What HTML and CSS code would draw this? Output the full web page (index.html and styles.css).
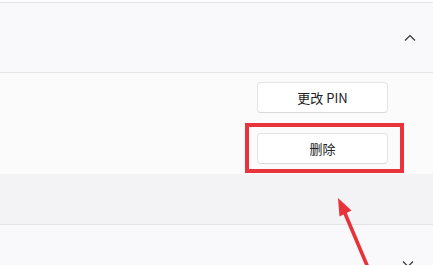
FILE: index.html
```html
<!DOCTYPE html>
<html lang="zh-CN">
<head>
<meta charset="utf-8">
<link rel="stylesheet" href="styles.css">
</head>
<body>
<div class="page">
  <div class="top-strip"></div>
  <div class="header">
    <svg class="chev" width="12" height="8" viewBox="0 0 12 8"><path d="M1 6.5 L6 1.5 L11 6.5" fill="none" stroke="#333" stroke-width="1.2"/></svg>
  </div>
  <div class="content">
    <button class="btn">更改 PIN</button>
    <div class="del-wrap">
      <button class="btn">删除</button>
      <div class="highlight"></div>
    </div>
  </div>
  <div class="band"></div>
  <div class="footer">
    <svg class="chev" width="12" height="8" viewBox="0 0 12 8"><path d="M1 1.5 L6 6.5 L11 1.5" fill="none" stroke="#333" stroke-width="1.2"/></svg>
  </div>
  <svg class="arrow" width="433" height="265" viewBox="0 0 433 265">
    <line x1="344" y1="211" x2="369" y2="270" stroke="#e8323a" stroke-width="3.6"/>
    <polygon points="338,198 351.5,210.5 339.5,216.5" fill="#e8323a"/>
  </svg>
</div>
</body>
</html>
```
FILE: styles.css
```css
html, body {
  margin: 0;
  padding: 0;
}
body {
  width: 433px;
  height: 265px;
  overflow: hidden;
  background: #f9f9fb;
  font-family: "Noto Sans CJK SC", "Noto Sans", sans-serif;
}
.page {
  position: relative;
  width: 433px;
  height: 265px;
  display: flex;
  flex-direction: column;
}
.top-strip {
  height: 2px;
  background: #fdfdfd;
  border-bottom: 1px solid #e6e6e8;
}
.header {
  height: 69px;
  background: #f9f9fb;
  border-bottom: 1px solid #e5e5e7;
  display: flex;
  align-items: center;
  justify-content: flex-end;
  padding-right: 17px;
}
.header .chev {
  margin-top: 1px;
}
.content {
  background: #fbfbfc;
  padding: 9px 45px 10px 0;
  display: flex;
  flex-direction: column;
  align-items: flex-end;
  gap: 20px;
}
.btn {
  width: 131px;
  height: 31px;
  background: #ffffff;
  border: 1px solid #e4e4e6;
  border-bottom-color: #d8d8da;
  border-radius: 4px;
  font-family: "Noto Sans CJK SC", "Noto Sans", sans-serif;
  font-size: 13px;
  color: #222222;
  padding: 0;
  display: block;
}
.del-wrap {
  position: relative;
}
.highlight {
  position: absolute;
  left: -12px;
  top: -10px;
  right: -16px;
  bottom: -9px;
  border: 4.5px solid #e8343a;
  box-sizing: border-box;
}
.band {
  height: 50px;
  background: #f3f3f5;
  border-bottom: 1px solid #e4e4e6;
}
.footer {
  flex: 1;
  background: #f9f9fb;
  display: flex;
  justify-content: flex-end;
  align-items: flex-end;
  padding-right: 19px;
}
.footer .chev {
  margin-bottom: -3px;
}
.arrow {
  position: absolute;
  left: 0;
  top: 0;
  pointer-events: none;
}
```
